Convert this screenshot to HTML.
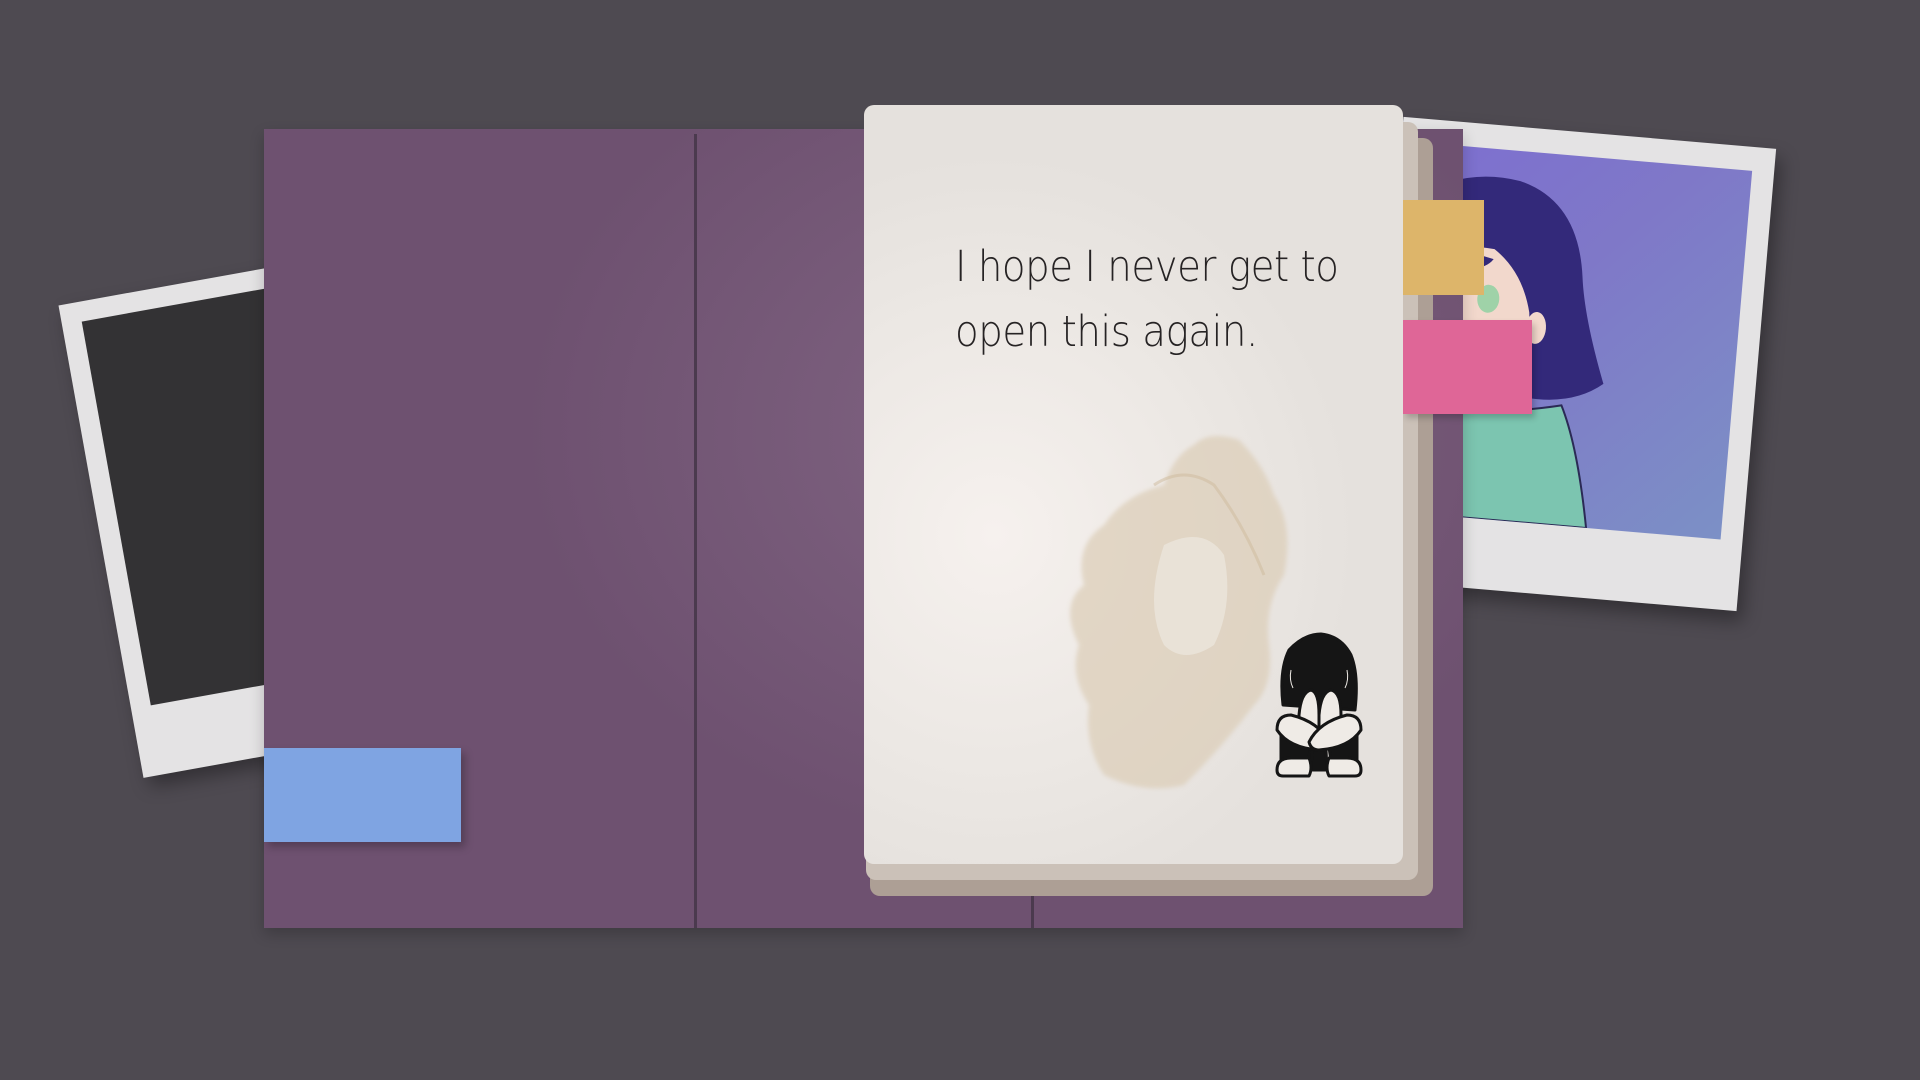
<!DOCTYPE html>
<html><head><style>
html,body{margin:0;padding:0}
body{width:1920px;height:1080px;background:#4e4a51;position:relative;overflow:hidden;font-family:"Liberation Sans",sans-serif}
.abs{position:absolute}
.pl{background:#e4e3e4;box-shadow:6px 10px 18px rgba(0,0,0,.35)}
</style></head><body>
<!-- left polaroid -->
<div class="abs pl" style="left:98px;top:268px;width:380px;height:480px;transform:rotate(-10.2deg)">
 <div class="abs" style="left:20px;top:20px;width:340px;height:390px;background:#333234"></div>
</div>
<!-- right polaroid -->
<div class="abs pl" style="left:1383px;top:132px;width:374px;height:464px;transform:rotate(4.9deg)">
 <div class="abs" style="left:22px;top:24px;width:330px;height:370px;overflow:hidden;background:linear-gradient(135deg,#7d6fd0 0%,#7f78c8 40%,#7c90c6 100%)">
  <svg width="330" height="370" viewBox="0 0 330 370">
   <path d="M-10 270 Q30 250 70 262 Q110 262 160 250 Q180 290 195 370 L-10 370Z" fill="#7cc5b0" stroke="#2b2a55" stroke-width="2"/>
   <path d="M20 262 Q40 238 62 250 L60 300 Q40 315 10 300 Z" fill="#efd2c8" stroke="#2b2a55" stroke-width="1.5"/>
   <path d="M-10 90 Q20 70 90 80 Q140 100 140 170 Q130 220 80 245 Q20 250 -10 220Z" fill="#f2d8cc"/>
   <path d="M-10 60 Q40 20 100 30 Q160 45 170 120 Q175 160 200 225 Q170 250 120 245 Q125 200 120 160 Q110 120 80 100 Q30 95 -10 120Z" fill="#33297a"/>
   <path d="M0 115 Q40 100 80 110 Q70 125 40 120Z" fill="#33297a"/>
   <ellipse cx="20" cy="145" rx="9" ry="12" fill="#9fd2a8"/><ellipse cx="78" cy="150" rx="11" ry="14" fill="#9fd2a8"/>
   <ellipse cx="128" cy="175" rx="10" ry="16" fill="#f2d8cc"/>
  </svg>
 </div>
</div>
<!-- folder -->
<div class="abs" style="left:264px;top:129px;width:1199px;height:799px;background:radial-gradient(ellipse 520px 420px at 780px 300px,#806482 0%,#6e5170 100%);box-shadow:0 6px 14px rgba(0,0,0,.2)"></div>
<div class="abs" style="left:694px;top:134px;width:3px;height:794px;background:#4b3a4e"></div>
<div class="abs" style="left:1031px;top:895px;width:3px;height:33px;background:#4b3a4e"></div>
<!-- blue tab -->
<div class="abs" style="left:264px;top:748px;width:197px;height:94px;background:#7fa4e2;box-shadow:4px 5px 8px rgba(0,0,0,.25)"></div>
<!-- paper stack -->
<div class="abs" style="left:870px;top:138px;width:563px;height:758px;background:#ad9f95;border-radius:10px"></div>
<div class="abs" style="left:866px;top:122px;width:552px;height:758px;background:#cbc1b8;border-radius:10px"></div>
<!-- tabs -->
<div class="abs" style="left:1403px;top:200px;width:81px;height:95px;background:#ddb56a"></div>
<div class="abs" style="left:1403px;top:320px;width:129px;height:94px;background:#df6697;box-shadow:3px 4px 6px rgba(0,0,0,.2)"></div>
<!-- paper -->
<div class="abs" style="left:864px;top:105px;width:539px;height:759px;border-radius:10px;background:radial-gradient(ellipse 360px 380px at 130px 430px,#f6f1ee 0%,#ece8e4 60%,#e5e1dd 100%);overflow:hidden">
 <div class="abs" style="left:91px;top:130px;font-size:43px;line-height:65px;color:#262324;letter-spacing:-0.5px;font-family:'DejaVu Sans',sans-serif;font-weight:200;transform:scaleX(0.9);transform-origin:left">I hope I never get to<br>open this again.</div>
 <svg class="abs" style="left:0;top:0" width="539" height="759">
  <defs><filter id="b"><feGaussianBlur stdDeviation="2"/></filter></defs>
  <g filter="url(#b)" fill="#dccdb7" opacity=".7">
   <path d="M330 340 Q345 325 375 335 Q400 360 410 390 Q430 420 420 470 Q400 500 405 540 Q410 580 390 600 Q360 640 320 680 Q280 690 240 670 Q220 640 225 600 Q205 570 215 540 Q195 500 220 480 Q210 440 240 420 Q260 390 300 380 Q310 350 330 340Z"/>
  </g>
  <g fill="#eae3d9" opacity=".9"><path d="M300 440 Q340 420 360 450 Q370 500 350 540 Q320 560 300 540 Q280 500 300 440Z"/></g>
  <path d="M290 380 Q320 360 350 380 Q380 420 400 470" stroke="#cdb99c" stroke-width="3" fill="none" opacity=".5"/>
 </svg>
 <!-- character -->
 <svg class="abs" style="left:405px;top:525px" width="100" height="150" viewBox="0 0 100 150">
  <g stroke="#151515" stroke-width="3" fill="#151515" stroke-linejoin="round">
   <path d="M14 75 Q10 40 20 20 Q35 4 52 4 Q72 6 82 25 Q90 45 86 80 Z"/>
   <path d="M12 105 L12 140 Q20 130 40 130 L42 105Z"/>
   <path d="M88 105 L88 140 Q80 130 62 130 L58 105Z"/>
   <path d="M44 100 L56 100 L58 140 L42 140Z"/>
  </g>
  <g stroke="#efebe6" stroke-width="1" fill="none"><path d="M22 40 Q20 50 24 58"/><path d="M78 40 Q80 50 76 58"/></g>
  <g stroke="#151515" stroke-width="3" fill="#efebe6" stroke-linejoin="round">
   <path d="M30 85 Q32 62 42 60 Q50 62 50 85 L50 110 L30 108Z"/>
   <path d="M50 85 Q52 62 62 60 Q72 62 72 85 L70 110 L50 110Z"/>
   <path d="M8 100 Q8 85 22 85 Q50 92 60 112 Q58 120 50 120 Q20 118 8 100Z"/>
   <path d="M92 100 Q92 85 78 85 Q50 92 40 112 Q42 120 50 120 Q80 118 92 100Z"/>
   <path d="M8 140 Q8 128 22 128 L40 128 Q44 138 40 146 L14 146 Q8 146 8 140Z"/>
   <path d="M92 140 Q92 128 78 128 L60 128 Q56 138 60 146 L86 146 Q92 146 92 140Z"/>
  </g>
 </svg>
</div>
</body></html>
